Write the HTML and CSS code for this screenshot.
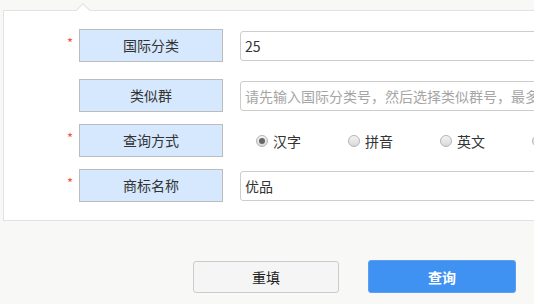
FILE: index.html
```html
<!DOCTYPE html>
<html lang="zh-CN">
<head>
  <meta charset="UTF-8" />
  <meta name="viewport" content="width=device-width, initial-scale=1.0"/>
  <title>商标查询</title>
  <link rel="stylesheet" href="styles.css">
</head>
<body>

  <!-- 查询条件 -->
  <div class="panel">
    <div class="row row-first">
      <span class="star">*</span>
      <div class="label">国际分类</div>
      <input class="field" type="text" value="25" />
    </div>

    <div class="row">
      <span class="star"></span>
      <div class="label">类似群</div>
      <input class="field" type="text" placeholder="请先输入国际分类号，然后选择类似群号，最多可选5个" />
    </div>

    <div class="row">
      <span class="star">*</span>
      <div class="label">查询方式</div>
      <div class="radios">
        <label class="radio"><input type="radio" name="way" checked /> 汉字</label>
        <label class="radio"><input type="radio" name="way" /> 拼音</label>
        <label class="radio"><input type="radio" name="way" /> 英文</label>
        <label class="radio"><input type="radio" name="way" /></label>
      </div>
    </div>

    <div class="row">
      <span class="star">*</span>
      <div class="label">商标名称</div>
      <input class="field" type="text" value="优品" />
    </div>
  </div>

  <div class="actions">
    <button class="btn btn-reset">重填</button>
    <button class="btn btn-search">查询</button>
  </div>

</body>
</html>
```

FILE: styles.css
```css
body {
  margin: 0;
  padding: 0;
  background-color: #f8f8f7;
  font-family: "Noto Sans CJK SC", "Noto Sans", sans-serif;
  font-size: 14px;
  color: #333;
  overflow: hidden;
}

.panel {
  position: relative;
  margin: 10px 0 0 3px;
  width: 620px;
  background-color: #fff;
  border: 1px solid #e2e2e2;
  padding: 18px 0 18px 0;
  display: flex;
  flex-direction: column;
  gap: 12px;
}

/* the little notch on top */
.panel::before {
  content: "";
  position: absolute;
  top: -6px;
  left: 74px;
  width: 9px;
  height: 9px;
  background-color: #fff;
  border-top: 1px solid #e2e2e2;
  border-left: 1px solid #e2e2e2;
  transform: rotate(45deg);
}

.row {
  display: flex;
  align-items: center;
}

.row-first {
  margin-bottom: 5px;
}

.star {
  flex-shrink: 0;
  width: 69px;
  padding-right: 6px;
  align-self: flex-start;
  padding-top: 7px;
  text-align: right;
  color: #f2553f;
  font-size: 13px;
  line-height: 13px;
}

.label {
  flex-shrink: 0;
  width: 142px;
  height: 31px;
  line-height: 31px;
  text-align: center;
  background-color: #d5e8fd;
  border: 1px solid #bcbcbc;
  color: #333;
}

.field {
  margin-left: 17px;
  width: 400px;
  height: 30px;
  box-sizing: border-box;
  border: 1px solid #cdcdcd;
  border-radius: 3px;
  padding: 0 4px;
  font-family: inherit;
  font-size: 14px;
  color: #333;
  outline: none;
}

.field::placeholder {
  color: #a5a5a5;
}

.radios {
  margin-left: 17px;
  padding-left: 16px;
  display: flex;
}

.radio {
  flex-shrink: 0;
  width: 92px;
  display: flex;
  align-items: center;
  gap: 1px;
  color: #333;
}

.radio input {
  appearance: none;
  margin: 0 4px 0 0;
  width: 12px;
  height: 12px;
  border-radius: 50%;
  border: 1px solid #b4b4b4;
  background: linear-gradient(#f4f4f4, #d9d9d9);
  box-sizing: border-box;
  position: relative;
}

.radio input:checked::after {
  content: "";
  position: absolute;
  left: 2px;
  top: 2px;
  width: 6px;
  height: 6px;
  border-radius: 50%;
  background-color: #666;
}

.actions {
  display: flex;
  margin-top: 39px;
  padding-left: 193px;
  gap: 29px;
  align-items: center;
}

.btn {
  height: 32px;
  border-radius: 3px;
  font-family: inherit;
  font-size: 14px;
  cursor: pointer;
}

.btn-reset {
  width: 146px;
  background-color: #f5f5f5;
  border: 1px solid #cbcbcb;
  color: #222;
}

.btn-search {
  width: 148px;
  height: 33px;
  background-color: #3f92f2;
  border: 1px solid #5a9ff0;
  color: #fff;
  font-weight: bold;
}
```
